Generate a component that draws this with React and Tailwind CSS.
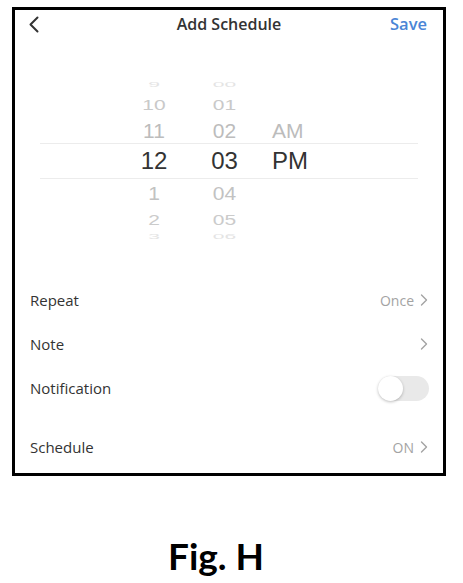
import React from "react";

const Chevron = () => (
  <svg width="8" height="12" viewBox="0 0 8 12" className="ml-[6px]">
    <path d="M1.5 1 L6.5 6 L1.5 11" fill="none" stroke="#a3a3a3" strokeWidth="1.4" strokeLinecap="round" strokeLinejoin="round" />
  </svg>
);

function WheelRow({ h, m, ap, height, scale, color, size, selected }) {
  return (
    <div
      className={`flex items-center mx-[25px] pl-[84px] ${selected ? "border-y border-[#ececec]" : ""}`}
      style={{ height }}
    >
      <div className="w-[60px] flex justify-center" style={{ color, fontSize: size, transform: `scaleY(${scale})` }}>{h}</div>
      <div className="w-[60px] ml-[10.5px] flex justify-center" style={{ color, fontSize: size, transform: `scaleY(${scale})` }}>{m}</div>
      <div className="ml-[17.5px]" style={{ color, fontSize: size, transform: `scaleY(${scale})` }}>{ap}</div>
    </div>
  );
}

export default function App() {
  const sans = { fontFamily: '"Open Sans", "Liberation Sans", sans-serif' };
  return (
    <div className="w-[463px] h-[583px] bg-white relative overflow-hidden">
      <div className="absolute left-[12px] top-[7px] w-[434px] h-[469px] border-[3px] border-black bg-white flex flex-col" style={sans}>
        {/* header */}
        <div className="h-[28px] flex items-center relative">
          <svg width="12" height="17" viewBox="0 0 12 17" className="ml-[13px]">
            <path d="M9.5 1.5 L2.5 8.5 L9.5 15.5" fill="none" stroke="#333" strokeWidth="2" strokeLinecap="round" strokeLinejoin="round" />
          </svg>
          <div className="absolute left-0 right-0 text-center text-[16px] font-semibold text-[#333] leading-none pointer-events-none">Add Schedule</div>
          <div className="ml-auto mr-[16px] text-[16.5px] font-semibold text-[#4a85d6] leading-none">Save</div>
        </div>

        {/* picker */}
        <div className="mt-[39px] overflow-hidden leading-none" style={{ fontFamily: '"Liberation Sans", Arial, sans-serif' }}>
          <WheelRow h="9" m="00" ap="" height={15} scale={0.35} color="#e4e4e4" size={21} />
          <WheelRow h="10" m="01" ap="" height={25} scale={0.74} color="#c9c9c9" size={21} />
          <WheelRow h="11" m="02" ap="AM" height={26} scale={1} color="#bcbcbc" size={21} />
          <WheelRow h="12" m="03" ap="PM" height={36} scale={1} color="#333" size={24} selected />
          <WheelRow h="1" m="04" ap="" height={28} scale={0.88} color="#c2c2c2" size={21} />
          <WheelRow h="2" m="05" ap="" height={24} scale={0.74} color="#cbcbcb" size={21} />
          <WheelRow h="3" m="06" ap="" height={11} scale={0.35} color="#e4e4e4" size={21} />
        </div>

        {/* list */}
        <div className="mt-[36px] flex flex-col text-[15px] text-[#333]">
          <div className="h-[44px] flex items-center pl-[15px] pr-[15px]">
            <span>Repeat</span>
            <span className="ml-auto text-[14px] text-[#a3a3a3]">Once</span>
            <Chevron />
          </div>
          <div className="h-[44px] flex items-center pl-[15px] pr-[15px]">
            <span>Note</span>
            <span className="ml-auto" />
            <Chevron />
          </div>
          <div className="h-[44px] flex items-center pl-[15px] pr-[14px]">
            <span>Notification</span>
            <div className="ml-auto w-[51px] h-[25px] rounded-full bg-[#e9e9e9] relative">
              <div className="absolute left-0 top-0 w-[25px] h-[25px] rounded-full bg-white shadow-[0_1px_3px_rgba(0,0,0,0.25)]" />
            </div>
          </div>
          <div className="h-[44px] mt-[15px] flex items-center pl-[15px] pr-[15px]">
            <span>Schedule</span>
            <span className="ml-auto text-[14px] text-[#a3a3a3]">ON</span>
            <Chevron />
          </div>
        </div>
      </div>

      <div className="absolute left-[168px] top-[537px] text-[37px] font-bold text-black leading-none" style={{ fontFamily: 'Lato, "DejaVu Sans", sans-serif' }}>
        Fig. H
      </div>
    </div>
  );
}
